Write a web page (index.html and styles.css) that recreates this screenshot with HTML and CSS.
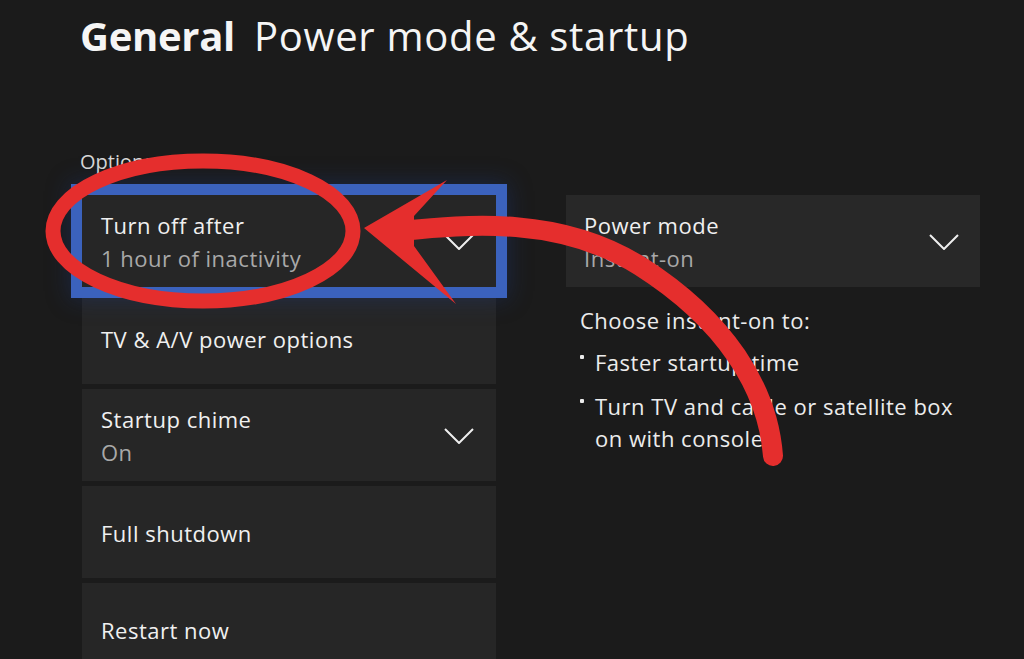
FILE: index.html
```html
<!DOCTYPE html>
<html lang="en">
<head>
<meta charset="utf-8">
<title>General Power mode &amp; startup</title>
<link rel="stylesheet" href="styles.css">
</head>
<body>
<div class="page">
  <h1 class="title"><span class="title-bold">General</span><span class="title-rest">Power mode &amp; startup</span></h1>
  <div class="section-label">Options</div>
  <div class="columns">
    <div class="list">
      <div class="item focused">
        <div class="texts">
          <div class="item-title">Turn off after</div>
          <div class="item-sub">1 hour of inactivity</div>
        </div>
        <svg class="chev" viewBox="0 0 30 16"><path d="M1 1 L15 15 L29 1" /></svg>
      </div>
      <div class="item">
        <div class="texts"><div class="item-title">TV &amp; A/V power options</div></div>
      </div>
      <div class="item">
        <div class="texts">
          <div class="item-title">Startup chime</div>
          <div class="item-sub">On</div>
        </div>
        <svg class="chev" viewBox="0 0 30 16"><path d="M1 1 L15 15 L29 1" /></svg>
      </div>
      <div class="item">
        <div class="texts"><div class="item-title">Full shutdown</div></div>
      </div>
      <div class="item">
        <div class="texts"><div class="item-title">Restart now</div></div>
      </div>
    </div>
    <div class="side">
      <div class="item side-box">
        <div class="texts">
          <div class="item-title">Power mode</div>
          <div class="item-sub">Instant-on</div>
        </div>
        <svg class="chev" viewBox="0 0 30 16"><path d="M1 1 L15 15 L29 1" /></svg>
      </div>
      <div class="desc">
        <p class="desc-lead">Choose instant-on to:</p>
        <ul class="bullets">
          <li><span class="dot"></span><span>Faster startup time</span></li>
          <li><span class="dot"></span><span>Turn TV and cable or satellite box<br>on with console</span></li>
        </ul>
      </div>
    </div>
  </div>
  <svg class="annotation" viewBox="0 0 1024 659" width="1024" height="659">
    <ellipse cx="203" cy="231" rx="150" ry="70" fill="none" stroke="#e52e2d" stroke-width="15"/>
    <path d="M400 231 C 470 224, 560 216, 640 266 C 725 320, 768 388, 773 456" fill="none" stroke="#e52e2d" stroke-width="20" stroke-linecap="round"/>
    <polygon points="447,180 364,228 456,304 414,246 414,216" fill="#e52e2d"/>
  </svg>
</div>
</body>
</html>
```

FILE: styles.css
```css
* { box-sizing: border-box; }
html, body {
  margin: 0;
  padding: 0;
  background: #1b1b1b;
  width: 1024px;
  height: 659px;
  overflow: hidden;
}
body {
  font-family: "Open Sans", "Noto Sans", "Liberation Sans", sans-serif;
  color: #f2f2f2;
}
.page {
  position: relative;
  width: 1024px;
  height: 659px;
  padding: 0 0 0 82px;
}
.title {
  margin: 0;
  padding-top: 9px;
  font-size: 40px;
  font-weight: 400;
  line-height: 54px;
  margin-left: -2px;
  color: #f5f5f5;
  display: flex;
  gap: 19px;
}
.title-bold {
  font-weight: 700;
  letter-spacing: -0.3px;
}
.title-rest {
  letter-spacing: 0.7px;
}
.section-label {
  margin-top: 86px;
  margin-left: -2px;
  font-size: 20px;
  line-height: 26px;
  color: #d8d8d8;
}
.columns {
  display: flex;
  gap: 70px;
  margin-top: 20px;
}
.list {
  width: 414px;
  display: flex;
  flex-direction: column;
  gap: 5px;
}
.side {
  width: 414px;
  display: flex;
  flex-direction: column;
}
.item {
  height: 92px;
  background: #262626;
  display: flex;
  align-items: center;
  justify-content: space-between;
  padding: 0 22px 0 19px;
}
.item.focused {
  outline: 11px solid #3b62bd;
  box-shadow: 0 0 22px 12px rgba(30, 60, 140, 0.35);
  position: relative;
  z-index: 1;
}
.texts {
  display: flex;
  flex-direction: column;
  padding-top: 2px;
}
.item-title {
  font-size: 22px;
  line-height: 33px;
  letter-spacing: 0.5px;
  color: #f0f0f0;
}
.item-sub {
  font-size: 22px;
  line-height: 33px;
  letter-spacing: 0.5px;
  color: #a9a9a9;
}
.chev {
  width: 30px;
  height: 16px;
  margin-top: 2px;
}
.chev path {
  fill: none;
  stroke: #eeeeee;
  stroke-width: 2;
}
.side-box {
  padding-left: 18px;
  padding-right: 21px;
  background: #282828;
}
.desc {
  padding-left: 14px;
  padding-top: 17px;
  font-size: 22px;
  line-height: 32px;
  letter-spacing: 0.5px;
  color: #ececec;
}
.desc-lead { margin: 0; }
.bullets {
  list-style: none;
  margin: 10px 0 0;
  padding: 0;
  display: flex;
  flex-direction: column;
  gap: 12px;
}
.bullets li {
  display: flex;
  align-items: flex-start;
  gap: 11px;
}
.dot {
  flex: none;
  width: 4px;
  height: 4px;
  margin-top: 9px;
  background: #ececec;
  border-radius: 1px;
}
.annotation {
  position: absolute;
  left: 0;
  top: 0;
  z-index: 5;
  pointer-events: none;
}
```
